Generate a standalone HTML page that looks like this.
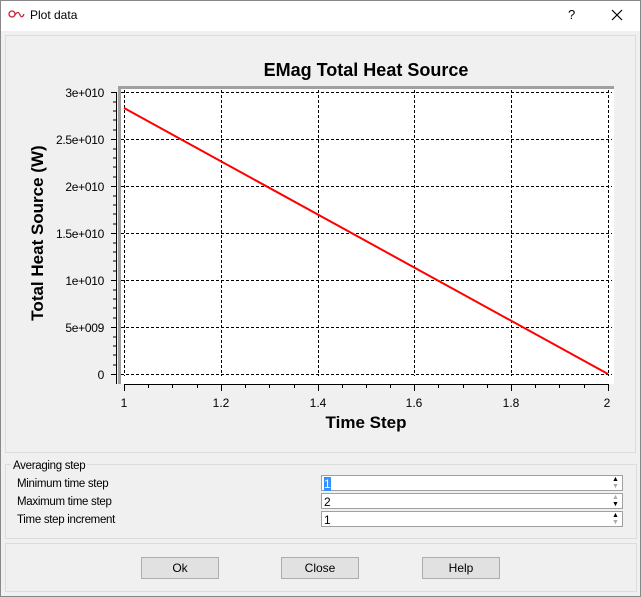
<!DOCTYPE html><html><head><style>
body{margin:0;width:641px;height:597px;background:#f0f0f0;font-family:"Liberation Sans",sans-serif;position:relative;overflow:hidden}
.a{position:absolute}
.win{left:0;top:0;width:639px;height:595px;border:1px solid #888}
.title{left:1px;top:1px;width:639px;height:30px;background:#fff}
.gb{border:1px solid #dcdcdc}
.lbl{font-size:11.5px;color:#000;letter-spacing:-0.3px}
.tb{background:#fff;border:1px solid #a0a0a0;height:16px;width:302px;left:321px;font-size:12px;line-height:16px;padding-left:2px;box-sizing:border-box}
.btn{border:1px solid #adadad;background:#e1e1e1;width:76px;height:20px;top:557px;font-size:12px;text-align:center;line-height:20px}
</style></head><body>
<div class="a win"></div>
<div class="a title"></div>
<svg class="a" style="left:8px;top:9px" width="18" height="12"><circle cx="4" cy="5" r="3" fill="none" stroke="#d02040" stroke-width="1.3"/><path d="M7 6 Q10 1 12 6 Q14 10 16 5" fill="none" stroke="#d02040" stroke-width="1.3"/></svg>
<div class="a" style="left:30px;top:8px;font-size:12px">Plot data</div>
<div class="a" style="left:568px;top:7px;font-size:13px">?</div>
<svg class="a" style="left:611px;top:9px" width="12" height="12"><path d="M1 1L11 11M11 1L1 11" stroke="#000" stroke-width="1.2"/></svg>
<div class="a gb" style="left:5px;top:35px;width:629px;height:416px"></div>
<div class="a gb" style="left:5px;top:464px;width:630px;height:73px"></div>
<div class="a" style="left:11px;top:456px;background:#f0f0f0;padding:0 2px" ><span class="lbl">Averaging step</span></div>
<div class="a gb" style="left:5px;top:543px;width:630px;height:47px"></div>
<svg class="a" style="left:0;top:0" width="641" height="450" font-family="Liberation Sans,sans-serif">
<text x="366" y="76" font-size="18" font-weight="bold" text-anchor="middle">EMag Total Heat Source</text>
<rect x="119" y="86" width="495" height="298" fill="#fff"/>
<path d="M119.5 384V87.5H614" stroke="#a0a0a0" stroke-width="3" fill="none"/>
<g stroke="#000" stroke-dasharray="3,2" stroke-width="1">
<path d="M124.5 90V376M221.5 90V376M318.5 90V376M414.5 90V376M511.5 90V376M608.5 90V376"/>
<path d="M121 92.5H612M121 139.5H612M121 186.5H612M121 233.5H612M121 280.5H612M121 327.5H612M121 374.5H612"/>
</g>
<path d="M124 108L608 374" stroke="#f00" stroke-width="2"/>
<g stroke="#000">
<path d="M116.5 92V384"/>
<path d="M111 92.5H116M111 139.5H116M111 186.5H116M111 233.5H116M111 280.5H116M111 327.5H116M111 374.5H116"/>
<path d="M113 102h3M113 111h3M113 120h3M113 130h3M113 149h3M113 158h3M113 167h3M113 177h3M113 196h3M113 205h3M113 214h3M113 224h3M113 243h3M113 252h3M113 261h3M113 271h3M113 290h3M113 299h3M113 308h3M113 318h3M113 337h3M113 346h3M113 355h3M113 365h3"/>
<path d="M124 384.5H608"/>
<path d="M124.5 384v7M221.5 384v7M318.5 384v7M414.5 384v7M511.5 384v7M608.5 384v7"/>
<path d="M148.5 384v4M172.5 384v4M197.5 384v4M245.5 384v4M269.5 384v4M294.5 384v4M342.5 384v4M366.5 384v4M390.5 384v4M438.5 384v4M463.5 384v4M487.5 384v4M535.5 384v4M559.5 384v4M584.5 384v4"/>
</g>
<g font-size="12" text-anchor="end" letter-spacing="-0.3">
<text x="104" y="97">3e+010</text><text x="104" y="144">2.5e+010</text><text x="104" y="191">2e+010</text><text x="104" y="238">1.5e+010</text><text x="104" y="285">1e+010</text><text x="104" y="332">5e+009</text><text x="104" y="379">0</text>
</g>
<g font-size="12" text-anchor="middle">
<text x="124" y="407">1</text><text x="221" y="407">1.2</text><text x="318" y="407">1.4</text><text x="414" y="407">1.6</text><text x="511" y="407">1.8</text><text x="607" y="407">2</text>
</g>
<text x="366" y="428" font-size="17" font-weight="bold" text-anchor="middle">Time Step</text>
<text transform="translate(43,233) rotate(-90)" font-size="17" font-weight="bold" text-anchor="middle">Total Heat Source (W)</text>
</svg>
<div class="a lbl" style="left:17px;top:478px">Minimum time step</div>
<div class="a lbl" style="left:17px;top:496px">Maximum time step</div>
<div class="a lbl" style="left:17px;top:514px">Time step increment</div>
<div class="a tb" style="top:475px"><span style="background:#3390ff;color:#fff">1</span></div>
<div class="a tb" style="top:493px">2</div>
<div class="a tb" style="top:511px">1</div>
<div class="a" style="left:612px;top:476px;font-size:7px;line-height:7px">▲<br><span style="color:#aaa">▼</span></div>
<div class="a" style="left:612px;top:494px;font-size:7px;line-height:7px"><span style="color:#aaa">▲</span><br>▼</div>
<div class="a" style="left:612px;top:512px;font-size:7px;line-height:7px">▲<br><span style="color:#aaa">▼</span></div>
<div class="a btn" style="left:141px">Ok</div>
<div class="a btn" style="left:281px">Close</div>
<div class="a btn" style="left:422px">Help</div>
</body></html>
